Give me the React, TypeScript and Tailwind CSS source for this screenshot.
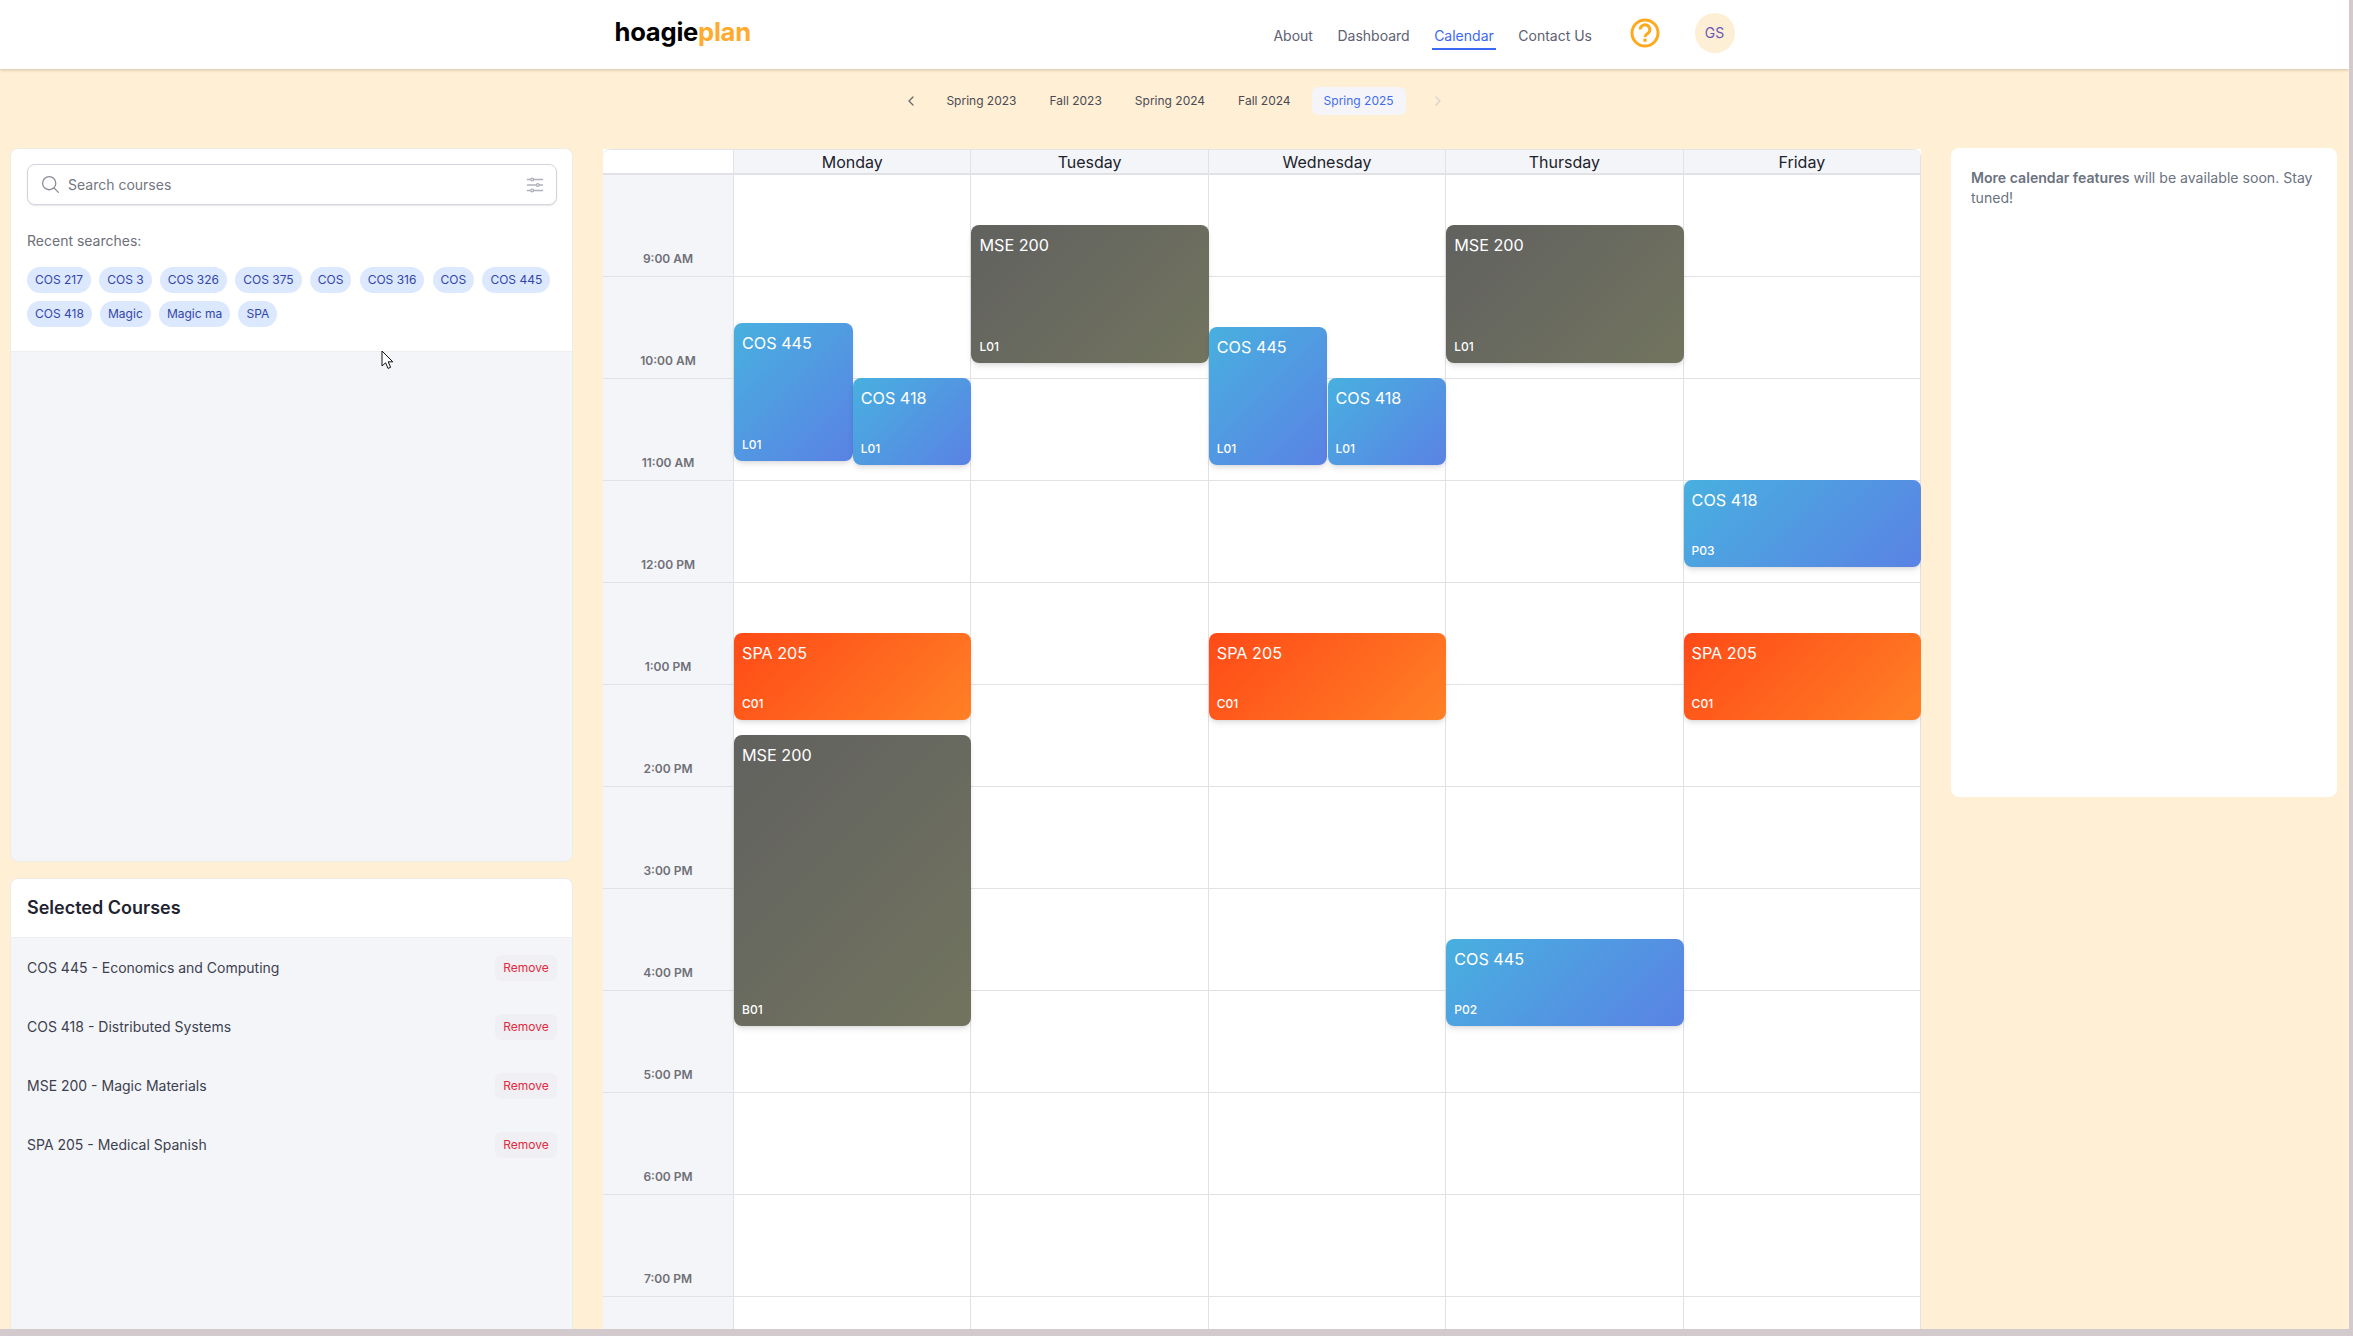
import { HiOutlineAdjustmentsHorizontal, HiOutlineMagnifyingGlass } from "react-icons/hi2";
import { LuChevronLeft, LuChevronRight } from "react-icons/lu";

const navLinks = ["About", "Dashboard", "Calendar", "Contact Us"];
const semesters = ["Spring 2023", "Fall 2023", "Spring 2024", "Fall 2024", "Spring 2025"];
const recentRows = [
  ["COS 217", "COS 3", "COS 326", "COS 375", "COS", "COS 316", "COS", "COS 445"],
  ["COS 418", "Magic", "Magic ma", "SPA"],
];
const selectedCourses = [
  "COS 445 - Economics and Computing",
  "COS 418 - Distributed Systems",
  "MSE 200 - Magic Materials",
  "SPA 205 - Medical Spanish",
];
const days = ["Monday", "Tuesday", "Wednesday", "Thursday", "Friday"];
const hours = [
  "9:00 AM",
  "10:00 AM",
  "11:00 AM",
  "12:00 PM",
  "1:00 PM",
  "2:00 PM",
  "3:00 PM",
  "4:00 PM",
  "5:00 PM",
  "6:00 PM",
  "7:00 PM",
  "",
];

const BLUE = "bg-[linear-gradient(135deg,#48b0df,#5a82e4)]";
const ORANGE = "bg-[linear-gradient(135deg,#ff4a17,#ff8026)]";
const GRAY = "bg-[linear-gradient(135deg,#61615f,#72745f)]";

// px from the top of the page, day is 0-4, half marks the side-by-side ones
const events = [
  { title: "COS 445", section: "L01", day: 0, half: 0, top: 323, bottom: 461, color: BLUE },
  { title: "COS 418", section: "L01", day: 0, half: 1, top: 378, bottom: 465, color: BLUE },
  { title: "SPA 205", section: "C01", day: 0, half: -1, top: 633, bottom: 720, color: ORANGE },
  { title: "MSE 200", section: "B01", day: 0, half: -1, top: 735, bottom: 1026, color: GRAY },
  { title: "MSE 200", section: "L01", day: 1, half: -1, top: 225, bottom: 363, color: GRAY },
  { title: "COS 445", section: "L01", day: 2, half: 0, top: 327, bottom: 465, color: BLUE },
  { title: "COS 418", section: "L01", day: 2, half: 1, top: 378, bottom: 465, color: BLUE },
  { title: "SPA 205", section: "C01", day: 2, half: -1, top: 633, bottom: 720, color: ORANGE },
  { title: "MSE 200", section: "L01", day: 3, half: -1, top: 225, bottom: 363, color: GRAY },
  { title: "COS 445", section: "P02", day: 3, half: -1, top: 939, bottom: 1026, color: BLUE },
  { title: "COS 418", section: "P03", day: 4, half: -1, top: 480, bottom: 567, color: BLUE },
  { title: "SPA 205", section: "C01", day: 4, half: -1, top: 633, bottom: 720, color: ORANGE },
];

function Header() {
  return (
    <header className="relative z-10 h-[69px] shrink-0 bg-white shadow-[0_1px_3px_rgba(80,60,20,0.25)]">
      <div className="mx-auto flex h-full w-[1120px] items-center justify-between">
        <div className="-mt-[5px] text-[25.6px] font-bold tracking-[-0.01em] text-black">
          hoagie<span className="text-[#ffab2e]">plan</span>
        </div>
        <div className="flex items-center">
          <nav className="mt-[3px] flex items-center gap-[24.5px]">
            {navLinks.map((link) => (
              <a
                key={link}
                className={
                  link === "Calendar"
                    ? "relative text-sm text-[#3b68f5] after:absolute after:-left-0.5 after:-right-0.5 after:top-[22px] after:h-0.5 after:bg-[#3b68f5]"
                    : "text-sm text-[#5d6172]"
                }
              >
                {link}
              </a>
            ))}
          </nav>
          <svg width="30" height="30" viewBox="0 0 30 30" fill="none" className="ml-[37.5px] -mt-[3px] text-[#ffa91f]">
            <circle cx="15" cy="15" r="13" stroke="currentColor" strokeWidth="3" />
            <path
              d="M10.2 11.6a4.8 4.8 0 1 1 7.4 4c-1.6 1-2.6 1.8-2.6 3.4"
              stroke="currentColor"
              strokeWidth="3"
            />
            <rect x="13.4" y="20.6" width="3.2" height="3.2" fill="currentColor" />
          </svg>
          <div className="ml-[35px] -mt-[3px] flex h-10 w-10 items-center justify-center rounded-full bg-[#fdeed6] text-sm text-[#6a57b8]">
            GS
          </div>
        </div>
      </div>
    </header>
  );
}

function SemesterTabs() {
  return (
    <div className="flex h-[79px] shrink-0 items-start justify-center gap-[9px] pt-[18px]">
      <div className="mr-[6px] flex h-7 items-center text-[#6b6b70]">
        <LuChevronLeft size={16} />
      </div>
      {semesters.map((semester) => (
        <button
          key={semester}
          className={
            semester === "Spring 2025"
              ? "h-7 rounded-md bg-[#f5f5f9] px-3 text-xs text-[#3f6cf0]"
              : "h-7 rounded-md px-3 text-xs text-[#4a4a54]"
          }
        >
          {semester}
        </button>
      ))}
      <div className="ml-[15px] flex h-7 items-center text-[#d9d4cc]">
        <LuChevronRight size={16} />
      </div>
    </div>
  );
}

function SearchPanel() {
  return (
    <section className="h-[714px] shrink-0 overflow-hidden rounded-lg border border-[#efece6] bg-[#f4f5f9]">
      <div className="border-b border-[#eeeef2] bg-white pb-6 pl-4 pr-[15px] pt-[15px]">
        <div className="flex h-[41px] items-center rounded-lg border border-[#d5d4dc] bg-white pl-3 pr-[10px] shadow-[0_1px_2px_rgba(0,0,0,0.1)]">
          <HiOutlineMagnifyingGlass size={21} className="text-[#8b8e99]" />
          <span className="ml-[7px] text-sm text-[#73767f]">Search courses</span>
          <HiOutlineAdjustmentsHorizontal size={22} className="ml-auto text-[#aeb1bc]" />
        </div>
        <p className="mt-[26px] text-sm leading-5 text-[#6d7078]">Recent searches:</p>
        <div className="mt-4 flex flex-col gap-2">
          {recentRows.map((row) => (
            <div key={row[0]} className="flex gap-[8.2px]">
              {row.map((chip, i) => (
                <span
                  key={chip + i}
                  className="flex h-[26px] items-center rounded-full bg-[#dbe8fe] px-2 text-xs text-[#3446a8]"
                >
                  {chip}
                </span>
              ))}
            </div>
          ))}
        </div>
      </div>
    </section>
  );
}

function SelectedCourses() {
  return (
    <section className="min-h-0 flex-1 overflow-hidden rounded-t-lg border border-b-0 border-[#efece6] bg-[#f4f5f9]">
      <div className="flex h-[59px] items-center border-b border-[#eeeef2] bg-white px-4">
        <h2 className="text-lg font-semibold text-[#1f2430]">Selected Courses</h2>
      </div>
      <div className="flex flex-col gap-[33px] pl-4 pr-[15px] pt-[17px]">
        {selectedCourses.map((course) => (
          <div key={course} className="flex h-[26px] items-center justify-between">
            <span className="text-sm text-[#3c3f4e]">{course}</span>
            <button className="h-[26px] w-[62px] rounded-md bg-[#f0f0f4] text-xs text-[#e4283f]">Remove</button>
          </div>
        ))}
      </div>
    </section>
  );
}

function Calendar() {
  return (
    <div className="relative mt-px h-full w-[1318px] shrink-0 overflow-hidden bg-white">
      <div className="grid grid-cols-[131px_repeat(5,minmax(0,1fr))] overflow-hidden rounded-t-lg border-t border-[#e4e4e8]">
        <div className="h-[25px] border-b-2 border-r border-[#e2e2e6] bg-white" />
        {days.map((day) => (
          <div
            key={day}
            className="flex h-[25px] items-center justify-center border-b-2 border-r border-[#e2e2e6] bg-[#f4f5f9] text-base text-[#20232c]"
          >
            {day}
          </div>
        ))}
        {hours.map((hour) => (
          <div key={hour} className="contents">
            <div className="flex h-[102px] items-end justify-center border-b border-r border-[#e2e2e6] bg-[#f4f5f9] pb-[9px] text-xs font-semibold text-[#6f7076]">
              {hour}
            </div>
            {days.map((day) => (
              <div key={day} className="h-[102px] border-b border-r border-[#e2e2e6] bg-white" />
            ))}
          </div>
        ))}
      </div>
      {events.map((event) => {
        const colWidth = 237.4;
        const isHalf = event.half >= 0;
        return (
          <div
            key={event.title + event.day + event.top}
            className={`absolute flex flex-col justify-between rounded-lg p-2 text-white shadow-md ${event.color}`}
            style={{
              left: 131 + event.day * colWidth + (event.half === 1 ? colWidth / 2 : 0),
              width: isHalf ? colWidth / 2 : colWidth,
              top: event.top - 149,
              height: event.bottom - event.top,
            }}
          >
            <span className="text-[16.2px] leading-6">{event.title}</span>
            <span className="text-xs font-medium leading-4">{event.section}</span>
          </div>
        );
      })}
    </div>
  );
}

export default function App() {
  return (
    <div className="relative h-[1336px] w-[2353px] overflow-hidden bg-[#d2cacd] font-['Inter',sans-serif]">
      <div className="flex h-[1329px] w-[2349px] flex-col overflow-hidden bg-[#ffefd5]">
        <Header />
        <SemesterTabs />
        <main className="flex min-h-0 flex-1 items-start pl-[10px]">
          <div className="flex h-full w-[563px] shrink-0 flex-col gap-[16px]">
            <SearchPanel />
            <SelectedCourses />
          </div>
          <div className="ml-[30px] h-full">
            <Calendar />
          </div>
          <aside className="ml-[30px] h-[649px] w-[386px] shrink-0 rounded-lg bg-white p-5 text-[14.1px] leading-5 text-[#6b7280]">
            <strong className="font-semibold">More calendar features</strong> will be available soon. Stay tuned!
          </aside>
        </main>
      </div>
      {/* mouse pointer caught in the screenshot */}
      <svg width="13" height="20" viewBox="0 0 13 20" className="absolute left-[381px] top-[350px]">
        <path d="M1 1v15l3.6-3.2 2.4 5.6 2.6-1.1-2.4-5.5h4.6z" fill="#fff" stroke="#111" strokeWidth="1" />
      </svg>
    </div>
  );
}
